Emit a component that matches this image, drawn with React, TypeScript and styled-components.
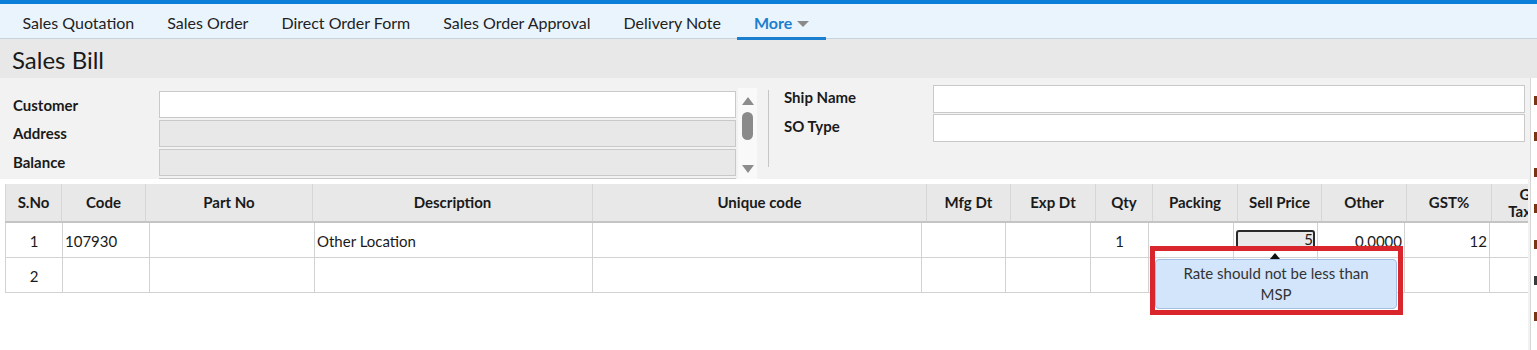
import React from "react";
import styled, { createGlobalStyle, css } from "styled-components";

const GlobalStyle = createGlobalStyle`
  html, body { margin: 0; padding: 0; background: #fff; }
  body { font-family: Lato, "Open Sans", "Liberation Sans", sans-serif; color: #222; }
  * { box-sizing: border-box; }
`;

const Page = styled.div`
  position: relative;
  width: 1537px;
  height: 350px;
  overflow: hidden;
  background: #fff;
`;

const TopStripe = styled.div`
  height: 4px;
  background: #0a7fd9;
`;

const TabBar = styled.nav`
  display: flex;
  height: 35px;
  padding: 3px 0 0 6px;
  background: #eaf4fd;
  border-bottom: 1px solid #c6d4e0;
`;

const Tab = styled.div<{ $active?: boolean }>`
  position: relative;
  display: flex;
  align-items: center;
  gap: 5px;
  padding: 0 16.5px;
  font-size: 16px;
  color: ${(p) => (p.$active ? "#1b7fcf" : "#222")};
  font-weight: ${(p) => (p.$active ? 700 : 400)};
  ${(p) =>
    p.$active &&
    css`
      &::after {
        content: "";
        position: absolute;
        left: 0;
        right: 0;
        bottom: -2px;
        height: 3px;
        background: #1b7fcf;
      }
    `}
`;

const Caret = styled.span`
  width: 0;
  height: 0;
  border-left: 6px solid transparent;
  border-right: 6px solid transparent;
  border-top: 6px solid #8a8a8a;
  margin-top: 2px;
`;

const TitleBar = styled.h1`
  margin: 0;
  height: 39px;
  display: flex;
  align-items: center;
  padding: 2px 0 0 12px;
  background: #e8e8e8;
  font-size: 24px;
  font-weight: 400;
  color: #1a1a1a;
`;

const Main = styled.div`
  display: flex;
`;

const Content = styled.div`
  width: 1528px;
  flex: none;
  overflow: hidden;
`;

const FormArea = styled.div`
  display: flex;
  height: 101px;
  background: #f2f2f2;
`;

const LeftPanel = styled.div`
  width: 757px;
  flex: none;
  display: flex;
  overflow: hidden;
`;

const FieldStack = styled.div`
  width: 738px;
  flex: none;
  display: flex;
  flex-direction: column;
  gap: 2px;
  padding: 13px 2px 0 13px;
`;

const FieldRow = styled.div<{ $h: number }>`
  display: flex;
  align-items: center;
  height: ${(p) => p.$h}px;
  flex: none;
`;

const FieldLabel = styled.label<{ $w: number; $lift?: number }>`
  width: ${(p) => p.$w}px;
  flex: none;
  font-size: 15px;
  font-weight: 700;
  color: #1a1a1a;
  padding-bottom: ${(p) => (p.$lift ?? 0) * 2}px;
`;

const TextBox = styled.div<{ $readOnly?: boolean }>`
  flex: 1;
  height: 100%;
  border: 1px solid #c9c9c9;
  background: ${(p) => (p.$readOnly ? "#e8e8e8" : "#fff")};
`;

const ScrollTrack = styled.div`
  width: 19px;
  flex: none;
  margin-top: 10px;
  background: #f9f9f9;
  display: flex;
  flex-direction: column;
  align-items: center;
  padding: 9px 0 6px;
`;

const ArrowUp = styled.span`
  width: 0;
  height: 0;
  border-left: 6px solid transparent;
  border-right: 6px solid transparent;
  border-bottom: 8px solid #8c8c8c;
`;

const ArrowDown = styled.span`
  margin-top: auto;
  width: 0;
  height: 0;
  border-left: 6px solid transparent;
  border-right: 6px solid transparent;
  border-top: 8px solid #8c8c8c;
`;

const Thumb = styled.span`
  margin-top: 7px;
  width: 11px;
  height: 28px;
  border-radius: 6px;
  background: #8a8a8a;
`;

const Divider = styled.div`
  width: 1px;
  height: 77px;
  margin: 12px 0 0 11px;
  background: #c6c6c6;
  flex: none;
`;

const RightPanel = styled.div`
  flex: 1;
  display: flex;
  flex-direction: column;
  gap: 1px;
  padding: 7px 3px 0 15px;
`;

const Table = styled.div`
  margin: 5px 0 0 5px;
  width: 1570px;
`;

const HeaderRow = styled.div<{ $cols: string }>`
  display: grid;
  grid-template-columns: ${(p) => p.$cols};
  height: 39px;
  background: #e8e8e8;
  border-bottom: 2px solid #c4c4c4;
`;

const HeadCell = styled.div`
  display: flex;
  align-items: center;
  justify-content: center;
  text-align: center;
  padding: 0 4px;
  font-size: 15px;
  font-weight: 700;
  line-height: 17px;
  color: #1a1a1a;
  border-right: 1px solid #d6d6d6;
  overflow: hidden;
  &:first-child {
    border-left: 1px solid #d6d6d6;
  }
`;

const BodyRow = styled.div<{ $cols: string }>`
  display: grid;
  grid-template-columns: ${(p) => p.$cols};
  height: 35px;
  border-bottom: 1px solid #d2d2d2;
`;

const BodyCell = styled.div<{ $align?: "left" | "center" | "right" }>`
  display: flex;
  align-items: center;
  justify-content: ${(p) =>
    p.$align === "center" ? "center" : p.$align === "right" ? "flex-end" : "flex-start"};
  padding: 2px 2px 0;
  font-size: 15px;
  color: #1a1a1a;
  border-right: 1px solid #d2d2d2;
  white-space: nowrap;
  overflow: hidden;
  &:first-child {
    border-left: 1px solid #d2d2d2;
  }
`;

const PriceBox = styled.div`
  width: 80px;
  height: 19px;
  margin-bottom: 4px;
  border: 2px solid #2a2a2a;
  border-radius: 3px;
  background: #e9e9e9;
  display: flex;
  align-items: center;
  justify-content: flex-end;
  font-size: 15px;
  line-height: 15px;
  overflow: hidden;
`;

const Sliver = styled.div`
  flex: 1;
  padding-left: 2px;
  background: #f2f2f2;
  height: 272px;
`;

const SliverInner = styled.div`
  height: 100%;
  background: #fff;
  border-left: 1px solid #d8d8d8;
  display: flex;
  flex-direction: column;
  gap: 27px;
  padding: 18px 0 0 3px;
`;

const SliverMark = styled.span<{ $dark?: boolean }>`
  width: 4px;
  height: 9px;
  background: ${(p) => (p.$dark ? "#3a3a3a" : "#7a3512")};
`;

const Annotation = styled.div`
  position: absolute;
  left: 1150px;
  top: 246px;
  width: 253px;
  height: 69px;
  border: 5px solid #d9262c;
`;

const TipArrow = styled.span`
  position: absolute;
  left: 1270px;
  top: 253px;
  width: 0;
  height: 0;
  border-left: 5px solid transparent;
  border-right: 5px solid transparent;
  border-bottom: 6px solid #111;
`;

const Tooltip = styled.div`
  position: absolute;
  left: 1155px;
  top: 259px;
  width: 242px;
  height: 50px;
  background: #d2e5fb;
  border: 1px solid #a3c0e3;
  border-radius: 4px;
  display: flex;
  align-items: center;
  justify-content: center;
  text-align: center;
  font-size: 15px;
  line-height: 21px;
  color: #333;
  padding: 0 20px;
`;

const headCols = [57, 84, 167, 280, 334, 84, 85, 57, 85, 84, 85, 85, 84]
  .map((w) => `${w}px`)
  .join(" ");
const bodyCols = [58, 87, 165, 278, 329, 84, 85, 58, 85, 84, 87, 85, 85]
  .map((w) => `${w}px`)
  .join(" ");

const tabs = [
  "Sales Quotation",
  "Sales Order",
  "Direct Order Form",
  "Sales Order Approval",
  "Delivery Note",
];

const headers = [
  "S.No",
  "Code",
  "Part No",
  "Description",
  "Unique code",
  "Mfg Dt",
  "Exp Dt",
  "Qty",
  "Packing",
  "Sell Price",
  "Other",
  "GST%",
];

export default function App() {
  return (
    <Page>
      <GlobalStyle />
      <TopStripe />
      <TabBar>
        {tabs.map((t) => (
          <Tab key={t}>{t}</Tab>
        ))}
        <Tab $active>
          More <Caret />
        </Tab>
      </TabBar>
      <TitleBar>Sales Bill</TitleBar>
      <Main>
        <Content>
          <FormArea>
            <LeftPanel>
              <FieldStack>
                <FieldRow $h={27}>
                  <FieldLabel $w={146}>Customer</FieldLabel>
                  <TextBox />
                </FieldRow>
                <FieldRow $h={27}>
                  <FieldLabel $w={146} $lift={1}>
                    Address
                  </FieldLabel>
                  <TextBox $readOnly />
                </FieldRow>
                <FieldRow $h={27}>
                  <FieldLabel $w={146} $lift={1}>
                    Balance
                  </FieldLabel>
                  <TextBox $readOnly />
                </FieldRow>
                <FieldRow $h={27}>
                  <FieldLabel $w={146}>Mobile</FieldLabel>
                  <TextBox />
                </FieldRow>
              </FieldStack>
              <ScrollTrack>
                <ArrowUp />
                <Thumb />
                <ArrowDown />
              </ScrollTrack>
            </LeftPanel>
            <Divider />
            <RightPanel>
              <FieldRow $h={28}>
                <FieldLabel $w={149} $lift={2}>
                  Ship Name
                </FieldLabel>
                <TextBox />
              </FieldRow>
              <FieldRow $h={28}>
                <FieldLabel $w={149} $lift={2}>
                  SO Type
                </FieldLabel>
                <TextBox />
              </FieldRow>
            </RightPanel>
          </FormArea>
          <Table>
            <HeaderRow $cols={headCols}>
              {headers.map((h) => (
                <HeadCell key={h}>{h}</HeadCell>
              ))}
              <HeadCell>
                GST
                <br />
                Taxable
              </HeadCell>
            </HeaderRow>
            <BodyRow $cols={bodyCols}>
              <BodyCell $align="center">1</BodyCell>
              <BodyCell>107930</BodyCell>
              <BodyCell />
              <BodyCell>Other Location</BodyCell>
              <BodyCell />
              <BodyCell />
              <BodyCell />
              <BodyCell $align="center">1</BodyCell>
              <BodyCell />
              <BodyCell $align="center">
                <PriceBox>5</PriceBox>
              </BodyCell>
              <BodyCell $align="right">0.0000</BodyCell>
              <BodyCell $align="right">12</BodyCell>
              <BodyCell />
            </BodyRow>
            <BodyRow $cols={bodyCols}>
              <BodyCell $align="center">2</BodyCell>
              {Array.from({ length: 12 }).map((_, i) => (
                <BodyCell key={i} />
              ))}
            </BodyRow>
          </Table>
        </Content>
        <Sliver>
          <SliverInner>
            <SliverMark />
            <SliverMark />
            <SliverMark />
            <SliverMark />
            <SliverMark />
            <SliverMark $dark />
            <SliverMark />
          </SliverInner>
        </Sliver>
      </Main>
      <Annotation />
      <TipArrow />
      <Tooltip>Rate should not be less than MSP</Tooltip>
    </Page>
  );
}
